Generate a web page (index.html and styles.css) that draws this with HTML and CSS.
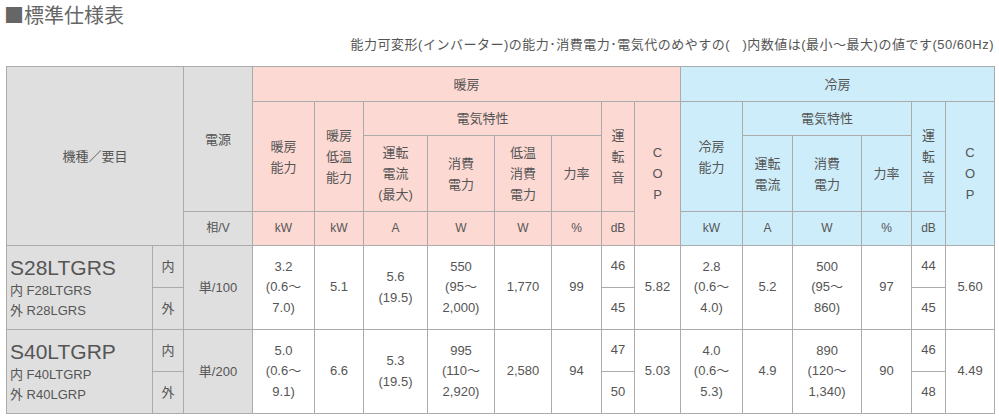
FILE: index.html
```html
<!DOCTYPE html>
<html lang="ja">
<head>
<meta charset="utf-8">
<title>標準仕様表</title>
<link rel="stylesheet" href="styles.css">
</head>
<body>
<h1 class="title">■標準仕様表</h1>
<p class="note">能力可変形(インバーター)の能力･消費電力･電気代のめやすの(&nbsp;&nbsp;&nbsp;)内数値は(最小～最大)の値です(50/60Hz)</p>
<table class="spec">
  <colgroup>
    <col class="w146"><col class="w31"><col class="w69">
    <col class="w62"><col class="w49"><col class="w64"><col class="w67"><col class="w57"><col class="w50"><col class="w33"><col class="w46">
    <col class="w62"><col class="w50"><col class="w69"><col class="w50"><col class="w34"><col class="w49">
  </colgroup>
  <tr class="r1">
    <th class="g" rowspan="4" colspan="2">機種／要目</th>
    <th class="g" rowspan="3">電源</th>
    <th class="p" colspan="8">暖房</th>
    <th class="b" colspan="6">冷房</th>
  </tr>
  <tr class="r2">
    <th class="p" rowspan="2">暖房<br>能力</th>
    <th class="p" rowspan="2">暖房<br>低温<br>能力</th>
    <th class="p" colspan="4">電気特性</th>
    <th class="p" rowspan="2">運<br>転<br>音</th>
    <th class="p" rowspan="3">C<br>O<br>P</th>
    <th class="b" rowspan="2">冷房<br>能力</th>
    <th class="b" colspan="3">電気特性</th>
    <th class="b" rowspan="2">運<br>転<br>音</th>
    <th class="b" rowspan="3">C<br>O<br>P</th>
  </tr>
  <tr class="r3">
    <th class="p">運転<br>電流<br>(最大)</th>
    <th class="p">消費<br>電力</th>
    <th class="p">低温<br>消費<br>電力</th>
    <th class="p">力率</th>
    <th class="b">運転<br>電流</th>
    <th class="b">消費<br>電力</th>
    <th class="b">力率</th>
  </tr>
  <tr class="r4 unit">
    <th class="g">相/V</th>
    <th class="p">kW</th><th class="p">kW</th><th class="p">A</th><th class="p">W</th><th class="p">W</th><th class="p">%</th><th class="p">dB</th>
    <th class="b">kW</th><th class="b">A</th><th class="b">W</th><th class="b">%</th><th class="b">dB</th>
  </tr>

  <tr class="rd">
    <th class="g name" rowspan="2"><span class="model">S28LTGRS</span><br>内 F28LTGRS<br>外 R28LGRS</th>
    <th class="g io">内</th>
    <th class="g" rowspan="2">単/100</th>
    <td rowspan="2">3.2<br>(0.6～<br>7.0)</td>
    <td rowspan="2">5.1</td>
    <td rowspan="2">5.6<br>(19.5)</td>
    <td rowspan="2">550<br>(95～<br>2,000)</td>
    <td rowspan="2">1,770</td>
    <td rowspan="2">99</td>
    <td>46</td>
    <td rowspan="2">5.82</td>
    <td rowspan="2">2.8<br>(0.6～<br>4.0)</td>
    <td rowspan="2">5.2</td>
    <td rowspan="2">500<br>(95～<br>860)</td>
    <td rowspan="2">97</td>
    <td>44</td>
    <td rowspan="2">5.60</td>
  </tr>
  <tr class="rd">
    <th class="g io">外</th>
    <td>45</td>
    <td>45</td>
  </tr>

  <tr class="rd">
    <th class="g name" rowspan="2"><span class="model">S40LTGRP</span><br>内 F40LTGRP<br>外 R40LGRP</th>
    <th class="g io">内</th>
    <th class="g" rowspan="2">単/200</th>
    <td rowspan="2">5.0<br>(0.6～<br>9.1)</td>
    <td rowspan="2">6.6</td>
    <td rowspan="2">5.3<br>(19.5)</td>
    <td rowspan="2">995<br>(110～<br>2,920)</td>
    <td rowspan="2">2,580</td>
    <td rowspan="2">94</td>
    <td>47</td>
    <td rowspan="2">5.03</td>
    <td rowspan="2">4.0<br>(0.6～<br>5.3)</td>
    <td rowspan="2">4.9</td>
    <td rowspan="2">890<br>(120～<br>1,340)</td>
    <td rowspan="2">90</td>
    <td>46</td>
    <td rowspan="2">4.49</td>
  </tr>
  <tr class="rd">
    <th class="g io">外</th>
    <td>50</td>
    <td>48</td>
  </tr>
</table>
</body>
</html>
```

FILE: styles.css
```css
html, body {
  margin: 0;
  padding: 0;
  background: #fff;
}
body {
  font-family: "Liberation Sans", "Noto Sans CJK JP", sans-serif;
  color: #555;
}
.title {
  margin: 0;
  padding: 3px 0 0 4px;
  font-family: "Noto Sans CJK JP", sans-serif;
  font-size: 20px;
  line-height: 24px;
  font-weight: normal;
  color: #666;
}
.note {
  margin: 10px 0 0 0;
  padding-right: 5px;
  font-size: 13px;
  line-height: 16px;
  text-align: right;
  color: #555;
  letter-spacing: 0.5px;
}
.spec {
  margin: 13px 0 0 6px;
  width: 988px;
  table-layout: fixed;
  border-collapse: collapse;
  font-size: 13px;
  line-height: 21px;
}
.spec th, .spec td {
  border: 1px solid #ababab;
  padding: 0;
  text-align: center;
  vertical-align: middle;
  font-weight: normal;
  color: #555;
}
.spec td { background: #fff; line-height: 20.5px; }
.spec .g { background: #dfdfdf; }
.spec .p { background: #fdd9d4; }
.spec .b { background: #cdedfa; }
.unit th { font-size: 12px; }
.r1 { height: 35px; }
.r2 { height: 34px; }
.r3 { height: 76px; }
.r4 { height: 34px; }
.rd { height: 42px; }
.spec .name {
  text-align: left;
  padding-left: 3px;
  line-height: 20px;
}
.model {
  font-size: 21px;
  line-height: 26px;
}
.io { font-size: 13px; }
.w146 { width: 146px; }
.w31 { width: 31px; }
.w69 { width: 69px; }
.w62 { width: 62px; }
.w49 { width: 49px; }
.w64 { width: 64px; }
.w67 { width: 67px; }
.w57 { width: 57px; }
.w50 { width: 50px; }
.w33 { width: 33px; }
.w46 { width: 46px; }
.w34 { width: 34px; }
```
